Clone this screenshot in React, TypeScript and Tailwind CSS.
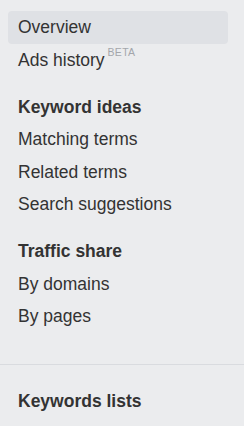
import React from "react";

function Item({ children, active }: { children: React.ReactNode; active?: boolean }) {
  return (
    <div
      className={`flex h-[32.5px] items-center rounded-[4px] pl-[10px] text-[17.5px] text-[#333333] ${
        active ? "bg-[#dfe1e5]" : ""
      }`}
    >
      {children}
    </div>
  );
}

function Heading({ children, className = "" }: { children: React.ReactNode; className?: string }) {
  return (
    <div className={`flex h-[32.5px] items-center pl-[10px] text-[17.5px] font-bold text-[#333333] ${className}`}>
      {children}
    </div>
  );
}

export default function App() {
  return (
    <div
      className="h-[426px] w-[244px] overflow-hidden bg-[#ebecee]"
      style={{ fontFamily: '"Liberation Sans", Arial, sans-serif' }}
    >
      <div className="px-2 pt-[11px] pr-4">
        <Item active>Overview</Item>
        <Item>
          <span>Ads history</span>
          <span className="relative -top-[7px] ml-[3px] text-[10.5px] tracking-[0.3px] text-[#a3a6ab]">BETA</span>
        </Item>
        <Heading className="mt-[14.5px]">Keyword ideas</Heading>
        <Item>Matching terms</Item>
        <Item>Related terms</Item>
        <Item>Search suggestions</Item>
        <Heading className="mt-[14.5px]">Traffic share</Heading>
        <Item>By domains</Item>
        <Item>By pages</Item>
      </div>
      <div className="mt-[31px] h-px w-full bg-[#d9dbdf]" />
      <div className="px-2 pt-[20px]">
        <Heading>Keywords lists</Heading>
      </div>
    </div>
  );
}
